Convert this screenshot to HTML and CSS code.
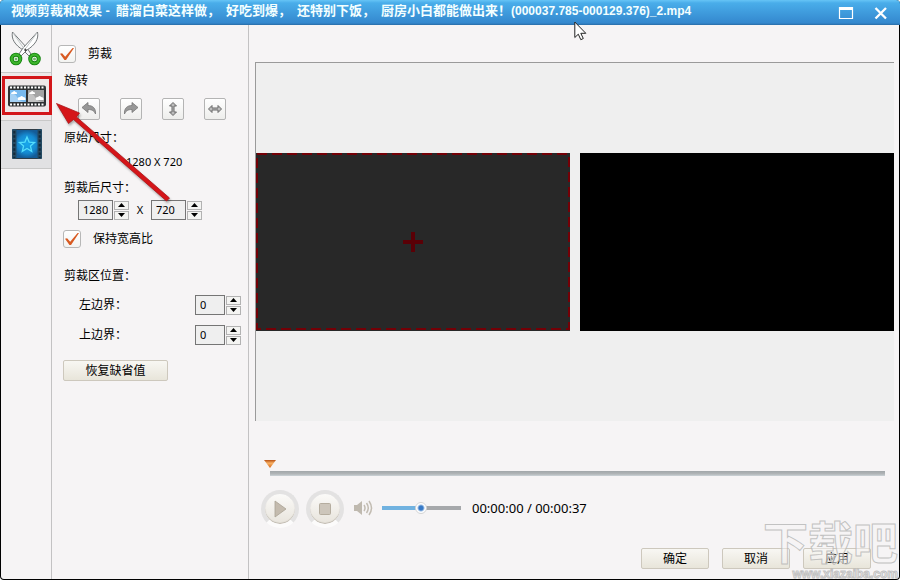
FILE: index.html
```html
<!DOCTYPE html>
<html lang="zh-CN">
<head>
<meta charset="utf-8">
<title>视频剪裁和效果</title>
<link rel="stylesheet" href="styles.css">
</head>
<body>
<div class="window">
  <header class="titlebar">
    <h1 class="title"><span>视频剪裁和效果 -</span><span>醋溜白菜这样做，</span><span>好吃到爆，</span><span>还特别下饭，</span><span>厨房小白都能做出来！<span class="file">(000037.785-000129.376)_2.mp4</span></span></h1>
    <button class="win-btn" type="button" aria-label="最大化"><svg width="16" height="14" viewBox="0 0 16 14"><path d="M1.500 1v11.500h13V1" fill="none" stroke="#fff" stroke-width="1.200"/><path d="M1 2.500h14" stroke="#fff" stroke-width="3"/></svg></button>
    <button class="win-btn" type="button" aria-label="关闭"><svg width="14" height="14" viewBox="0 0 14 14"><path d="M1.500 2l10.500 10.500M12 2L1.500 12.500" fill="none" stroke="#fff" stroke-width="2.300"/></svg></button>
  </header>
  <div class="body">
    <nav class="tabs">
      <button class="tab tab-current" type="button" aria-label="剪裁">
        <svg width="34" height="38" viewBox="0 0 34 38">
          <path d="M3.500 2C2 9 6 15 14 20l6 6 2-2-4-6z" fill="#f6f6f6" stroke="#74787a" stroke-width="1"/>
          <path d="M28.500 2C30 9 26 15 18 20l-6 6-2-2 4-6z" fill="#fff" stroke="#74787a" stroke-width="1"/>
          <path d="M4 3l12 17M28 3L17 18" stroke="#c4c8ca" stroke-width="1"/>
          <path d="M15 20h3M16.500 18.500v3" stroke="#444" stroke-width="1"/>
          <circle cx="7" cy="29" r="4.300" fill="#fff" stroke="#168411" stroke-width="4"/><circle cx="7" cy="29" r="4.300" fill="none" stroke="#3eb52c" stroke-width="2.200"/><circle cx="7" cy="29" r="1.500" fill="#71b568"/>
          <circle cx="25.500" cy="29" r="4.300" fill="#fff" stroke="#168411" stroke-width="4"/><circle cx="25.500" cy="29" r="4.300" fill="none" stroke="#3eb52c" stroke-width="2.200"/><circle cx="25.500" cy="29" r="1.500" fill="#71b568"/>
        </svg>
      </button>
      <button class="tab tab-marked" type="button" aria-label="视频效果">
        <svg width="38" height="22" viewBox="0 0 38 22">
          <rect x="0" y="0.500" width="38" height="21" rx="2" fill="#303234"/>
          <path d="M2 2.500h35M2 19.500h35" stroke="#fff" stroke-width="2" stroke-dasharray="2 1.500"/>
          <path d="M2 5h16v12H2z" fill="#77b9ee"/><path d="M20 5h16v12H20z" fill="#a4a4a4"/>
          <path d="M2 9c4-1 6 1 7 3 2 3 5 5 9 5H2zM20 9c4-1 6 1 7 3 2 3 5 5 9 5H20z" fill="#fff" opacity=".35"/>
          <path d="M3 9q0-2 2-2 1-2 2.500 0 2 0 1.500 2zM10 15q-1-3 2-3 2-2 3 0 3 0 2.500 3zM21 9q0-2 2-2 1-2 2.500 0 2 0 1.500 2zM28 15q-1-3 2-3 2-2 3 0 3 0 2.500 3z" fill="#fff"/>
        </svg>
      </button>
      <button class="tab tab-idle" type="button" aria-label="特效">
        <svg width="30" height="30" viewBox="0 0 30 30">
          <defs><radialGradient id="film"><stop offset="0" stop-color="#17a8ed"/><stop offset=".65" stop-color="#1589d0"/><stop offset="1" stop-color="#145c98"/></radialGradient></defs>
          <rect x="0" y="0" width="30" height="30" rx="2" fill="#303c46"/>
          <rect x="1" y="1" width="28" height="28" rx="1" fill="url(#film)"/>
          <path d="M0 1q0-1 1-1h3.500v30H1q-1 0-1-1zM25.500 0H29q1 0 1 1v28q0 1-1 1h-3.500z" fill="#244a63"/>
          <path d="M2.300 2v27M27.700 2v27" stroke="#14293a" stroke-width="2" stroke-dasharray="2.500 1.800"/>
          <path d="M15 8l2.100 5.100 5.400.4-4.100 3.500 1.300 5.300-4.700-2.800-4.700 2.800 1.300-5.300-4.100-3.500 5.400-.4z" fill="none" stroke="#54ddfc" stroke-width="1.300"/>
        </svg>
      </button>
    </nav>
    <form class="panel">
      <label class="check check-top"><input type="checkbox" checked><span>剪裁</span></label>
      <div class="caption">旋转</div>
      <div class="tools">
        <button class="tool" type="button" aria-label="向左旋转"><svg width="16" height="16" viewBox="0 0 16 16"><path d="M1 6.500L7 1.500v3c5 0 8 3 7.500 8.500C13 9.500 10.500 8.500 7 8.500v3z" fill="#989898" stroke="#777" stroke-width=".8"/></svg></button>
        <button class="tool" type="button" aria-label="向右旋转"><svg width="16" height="16" viewBox="0 0 16 16"><path d="M15 6.500L9 1.500v3c-5 0-8 3-7.500 8.500C3 9.500 5.500 8.500 9 8.500v3z" fill="#989898" stroke="#777" stroke-width=".8"/></svg></button>
        <button class="tool" type="button" aria-label="垂直翻转"><svg width="16" height="16" viewBox="0 0 16 16"><path d="M8 1.500L11.500 5H9v6h2.500L8 14.500 4.500 11H7V5H4.500z" fill="#bbb" stroke="#696969" stroke-width="1"/></svg></button>
        <button class="tool" type="button" aria-label="水平翻转"><svg width="16" height="16" viewBox="0 0 16 16"><path d="M1.500 8L5 4.500V7h6V4.500L14.500 8 11 11.500V9H5v2.500z" fill="#bbb" stroke="#696969" stroke-width="1"/></svg></button>
      </div>
      <div class="caption">原始尺寸：</div>
      <div class="original">1280 X 720</div>
      <div class="caption">剪裁后尺寸：</div>
      <div class="size">
        <span class="spin"><input class="num" type="text" value="1280" aria-label="宽度"><span class="steps"><button type="button" class="step up" aria-label="增加宽度"></button><button type="button" class="step down" aria-label="减小宽度"></button></span></span>
        <span class="times">X</span>
        <span class="spin"><input class="num" type="text" value="720" aria-label="高度"><span class="steps"><button type="button" class="step up" aria-label="增加高度"></button><button type="button" class="step down" aria-label="减小高度"></button></span></span>
      </div>
      <label class="check check-ratio"><input type="checkbox" checked><span>保持宽高比</span></label>
      <div class="caption caption-area">剪裁区位置：</div>
      <div class="edge">
        <label for="left">左边界：</label>
        <span class="spin"><input class="num num-small" id="left" type="text" value="0"><span class="steps"><button type="button" class="step up" aria-label="增加左边界"></button><button type="button" class="step down" aria-label="减小左边界"></button></span></span>
      </div>
      <div class="edge">
        <label for="top">上边界：</label>
        <span class="spin"><input class="num num-small" id="top" type="text" value="0"><span class="steps"><button type="button" class="step up" aria-label="增加上边界"></button><button type="button" class="step down" aria-label="减小上边界"></button></span></span>
      </div>
      <button class="btn btn-reset" type="button">恢复缺省值</button>
    </form>
    <main class="main">
      <section class="stage">
        <div class="video video-source">
          <svg class="crop" width="100%" height="100%"><rect x="1" y="1" width="312" height="175" fill="none" stroke="#730006" stroke-width="2" stroke-dasharray="10 5"/></svg>
          <svg class="cross" width="20" height="20" viewBox="0 0 20 20"><path d="M0 10h20M10 0v20" stroke="#5a0006" stroke-width="4"/></svg>
        </div>
        <div class="video"></div>
      </section>
      <input class="seek" type="range" min="0" max="37" value="0" aria-label="播放位置">
      <div class="player">
        <button class="round" type="button" aria-label="播放"><svg width="14" height="20" viewBox="0 0 14 20"><path d="M2 2l11 8-11 8z" fill="#c4bbae" stroke="#aaa294" stroke-width=".8"/></svg></button>
        <button class="round" type="button" aria-label="停止"><svg width="14" height="14" viewBox="0 0 14 14"><rect x="1.500" y="1.500" width="11" height="11" rx="1" fill="#cdc6bb" stroke="#b5ad9f"/></svg></button>
        <div class="sound">
          <svg width="20" height="18" viewBox="0 0 20 18"><path d="M1 6h3l5-4v14l-5-4H1z" fill="#bfb9af"/><path d="M11 6q2 3 0 6M13.500 4q3.500 5 0 10M16 2q5 7 0 14" fill="none" stroke="#c2bcb2" stroke-width="1.500"/></svg>
          <input class="volume" type="range" min="0" max="100" value="49" aria-label="音量">
          <span class="time">00:00:00 / 00:00:37</span>
        </div>
      </div>
      <footer class="actions">
        <button class="btn" type="button">确定</button>
        <button class="btn" type="button">取消</button>
        <button class="btn" type="button">应用</button>
      </footer>
    </main>
  </div>
  <div class="mark"><div class="mark-name">下载吧</div><div class="mark-url">www.xiazaiba.com</div></div>
  <div class="highlight"></div>
  <svg class="arrow" width="130" height="110" viewBox="0 0 130 110"><path d="M5.500 8.500L28.500 18l-3 4L118.500 103l-3 3-93-81.500-5 4z" fill="#d51519" stroke="#a91519" stroke-width=".8"/></svg>
  <svg class="cursor" width="14" height="20" viewBox="0 0 14 20"><path d="M.8 1v15.500l3.500-3.300 2.500 5.500 2.500-1.200-2.500-5.200h5z" fill="#fff" stroke="#222" stroke-width="1"/></svg>
</div>
</body>
</html>
```

FILE: styles.css
```css
* { box-sizing: border-box; }

body {
  margin: 0;
  background: #fff;
  color: #000;
  font: 12px/16px "Liberation Sans", "Noto Sans CJK SC", sans-serif;
}

button, input { font: inherit; color: inherit; margin: 0; padding: 0; }

.window {
  position: relative;
  display: flex;
  flex-direction: column;
  min-height: 100vh;
  overflow: hidden;
  background: #000;
  border-radius: 4px;
}

.titlebar {
  display: flex;
  align-items: center;
  height: 25px;
  padding: 0 12px 0 11px;
  background: linear-gradient(#66c4f6, #49adea 3px, #3488ce 23px, #286ca6);
}

.title {
  display: flex;
  flex: 1;
  gap: 6px;
  margin: 0 0 4px;
  color: #f4ffff;
  font-size: 13px;
  line-height: 20px;
  font-weight: bold;
  white-space: nowrap;
}

.file { font-size: 12px; }

.win-btn {
  display: flex;
  margin-left: 20px;
  border: 0;
  background: none;
}

.body {
  display: flex;
  flex: 1;
  margin: 0 1px 1px;
  background: #f6f4f5;
  border-radius: 0 0 3px 3px;
}

.tabs {
  width: 51px;
  border-right: 1px solid #c3c2c3;
}

.tab {
  display: flex;
  align-items: center;
  justify-content: center;
  width: 100%;
  height: 48px;
  padding: 0 0 2px 2px;
  border: 0;
  border-bottom: 1px solid #c8c8c8;
  background: #f6f4f5;
}

.tab-current { padding: 0; }
.tab-marked { background: #eee8e9; }
.tab-idle { background: #e1e1e3; }

.panel {
  width: 197px;
  padding: 20px 7px 20px 11px;
  border-right: 1px solid #c3c2c3;
}

.check {
  display: flex;
  align-items: center;
  gap: 12px;
  height: 18px;
}

.check-top { margin-left: -5px; }
.check-ratio { margin-top: 10px; }

.check input {
  display: grid;
  place-items: center;
  width: 18px;
  height: 18px;
  appearance: none;
  border: 1px solid #b7b7b7;
  border-radius: 3px;
  background: linear-gradient(#fff, #f3f3f1);
}

.check input:checked::before {
  content: "";
  width: 14px;
  height: 12px;
  background: #d85a22;
  clip-path: polygon(0 48%, 15% 44%, 37% 72%, 90% 0, 100% 0, 43% 100%, 32% 100%);
}

.caption { margin: 10px 0 0 1px; }
.caption-area { margin: 20px 0 11px 1px; }

.tools {
  display: flex;
  gap: 20px;
  margin: 9px 0 0 15px;
}

.tool {
  display: grid;
  place-items: center;
  width: 22px;
  height: 22px;
  border: 1px solid #b4b4b4;
  border-radius: 2px;
  background: linear-gradient(#fff, #eeeeec);
}

.original, .num, .times {
  font: 11px/16px "Noto Sans", sans-serif;
}

.original { margin: 8px 0 0 63px; }

.size {
  display: flex;
  align-items: center;
  margin: 4px 0 0 15px;
}

.spin { display: flex; align-items: center; gap: 1px; }

.num {
  width: 35px;
  height: 20px;
  padding: 0 4px 2px;
  border: 1px solid #757575;
  background: #efefef;
}

.num-small { width: 30px; }

.steps { display: grid; gap: 1px; }

.step {
  display: grid;
  place-items: center;
  width: 15px;
  height: 9px;
  border: 1px solid #b2b2b2;
  background: #f4f4f2;
}

.step::before {
  content: "";
  width: 7px;
  height: 4px;
  background: #000;
}

.up::before { clip-path: polygon(50% 0, 100% 100%, 0 100%); }
.down::before { clip-path: polygon(0 0, 100% 0, 50% 100%); }

.times { width: 22px; text-align: center; }

.edge {
  display: flex;
  align-items: center;
  justify-content: space-between;
  margin: 0 0 10px 16px;
}

.btn {
  width: 68px;
  height: 21px;
  border: 1px solid #cdc8bd;
  border-radius: 2px;
  background: linear-gradient(#f8f7f3, #e8e5da);
}

.btn-reset { width: 105px; margin-top: 5px; }

.main {
  display: flex;
  flex: 1;
  flex-direction: column;
  min-width: 0;
  padding: 37px 5px 10px 6px;
}

.stage {
  display: flex;
  flex: 1;
  align-items: center;
  gap: 10px;
  border-top: 1px solid #9a9a9a;
  border-left: 1px solid #9a9a9a;
  background: #efefef;
}

.video {
  flex: 1;
  aspect-ratio: 314 / 178;
  background: #000;
}

.video-source {
  position: relative;
  display: grid;
  place-items: center;
  background: #282828;
}

.crop { position: absolute; inset: 0; }

.seek, .volume { appearance: none; margin: 0; }

.seek {
  height: 16px;
  margin: 39px 3px 0 9px;
  background: linear-gradient(#a1a6a9, #b2b6b8 60%, #ccd3d8) 6px 11px / calc(100% - 12px) 5px no-repeat;
}

.seek::-webkit-slider-runnable-track { height: 16px; }

.seek::-webkit-slider-thumb {
  appearance: none;
  width: 12px;
  height: 8px;
  background: linear-gradient(#b75012, #f8b267 40%, #d66512);
  clip-path: polygon(0 0, 100% 0, 50% 100%);
}

.player {
  display: flex;
  align-items: center;
  height: 40px;
  margin: 13px 0 0 6px;
}

.round {
  display: grid;
  place-items: center;
  width: 38px;
  height: 38px;
  margin-right: 7px;
  border: 4px solid #e3e2e2;
  border-bottom-color: #fcfbfb;
  border-radius: 50%;
  background: linear-gradient(#fbfaf8, #e8e4dc) padding-box;
  box-shadow: inset 0 -1px 1px #bcb6ac;
}

.sound {
  display: flex;
  align-items: center;
  padding: 0 0 2px 2px;
}

.volume {
  width: 79px;
  height: 12px;
  margin-left: 9px;
  background: linear-gradient(90deg, #71b2e0 49%, #a6a8ab 49%) 0 center / 100% 4px no-repeat;
}

.volume::-webkit-slider-thumb {
  appearance: none;
  width: 12px;
  height: 12px;
  border: 1px solid #d4d4d4;
  border-radius: 50%;
  background: radial-gradient(#3779c7 0 2px, #fff 4px);
}

.time {
  margin-left: 11px;
  font: 13px/16px "Noto Sans", sans-serif;
}

.actions {
  display: flex;
  justify-content: flex-end;
  gap: 13px;
  margin: 19px 23px 0 0;
}

.mark {
  position: absolute;
  right: 2px;
  bottom: 0;
  color: rgba(246, 244, 245, 0.5);
  font-weight: bold;
  text-align: right;
  pointer-events: none;
  -webkit-text-stroke: 1px rgba(180, 180, 180, 0.8);
}

.mark-name {
  font-size: 45px;
  line-height: 46px;
}

.mark-url {
  font-size: 12px;
  line-height: 12px;
}

.highlight {
  position: absolute;
  left: 2px;
  top: 76px;
  width: 50px;
  height: 39px;
  border: 3px solid #d3161a;
}

.arrow {
  position: absolute;
  left: 51px;
  top: 95px;
  filter: drop-shadow(1px 2px 1px rgba(0, 0, 0, 0.3));
  pointer-events: none;
}

.cursor {
  position: absolute;
  left: 574px;
  top: 21px;
  pointer-events: none;
}
```
